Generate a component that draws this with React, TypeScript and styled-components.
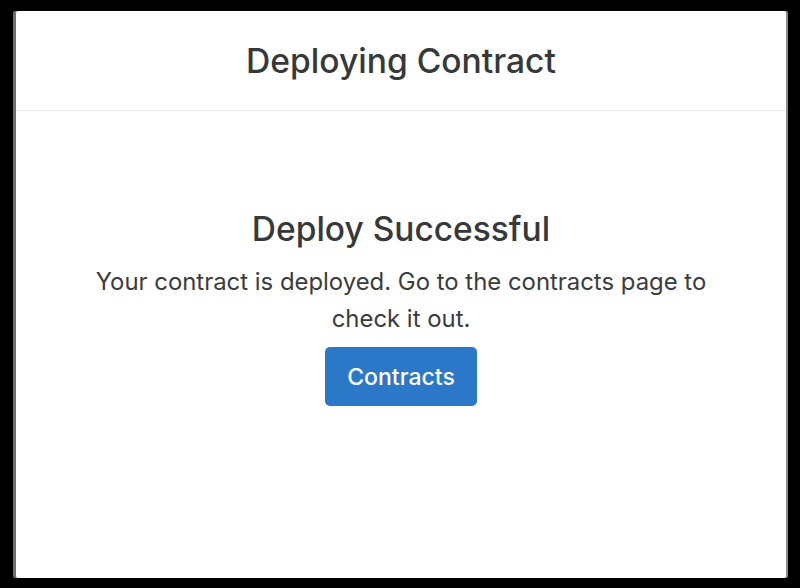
import React from "react";
import styled, { createGlobalStyle } from "styled-components";

const Global = createGlobalStyle`
  html, body {
    margin: 0;
    padding: 0;
    background: #000;
  }
  body {
    font-family: Inter, "Noto Sans", "Liberation Sans", sans-serif;
  }
  * { box-sizing: border-box; }
`;

const Stage = styled.div`
  width: 800px;
  height: 588px;
  background: #000;
  padding: 11px 12px 10px 16px;
`;

const Card = styled.div`
  width: 770px;
  height: 567px;
  background: #fff;
  border-radius: 2px;
  box-shadow: -3px 0 0 #6f6f6f, 2px 0 0 #8a8a8a;
  display: flex;
  flex-direction: column;
`;

const Header = styled.div`
  height: 100px;
  border-bottom: 1px solid #e4e9ed;
  display: flex;
  align-items: center;
  justify-content: center;
`;

const Title = styled.h1`
  margin: 0;
  font-size: 33.6px;
  font-weight: 500;
  color: #363839;
  letter-spacing: 0;
`;

const Body = styled.div`
  display: flex;
  flex-direction: column;
  align-items: center;
  padding: 98px 60px 0;
  text-align: center;
`;

const Heading = styled.h2`
  margin: 0;
  font-size: 33.5px;
  line-height: 40px;
  font-weight: 500;
  color: #363839;
`;

const Message = styled.p`
  margin: 14px 0 0;
  font-size: 23.9px;
  line-height: 37px;
  color: #3a3c3e;
  max-width: 640px;
`;

const PrimaryButton = styled.button`
  margin-top: 10px;
  width: 152px;
  height: 59px;
  border: none;
  border-radius: 5px;
  background: #2b78c9;
  color: #fff;
  font-family: inherit;
  font-size: 23px;
  font-weight: 500;
  cursor: pointer;
`;

export default function App() {
  return (
    <>
      <Global />
      <Stage>
        <Card>
          <Header>
            <Title>Deploying Contract</Title>
          </Header>
          <Body>
            <Heading>Deploy Successful</Heading>
            <Message>
              Your contract is deployed. Go to the contracts page to check it out.
            </Message>
            <PrimaryButton>Contracts</PrimaryButton>
          </Body>
        </Card>
      </Stage>
    </>
  );
}
